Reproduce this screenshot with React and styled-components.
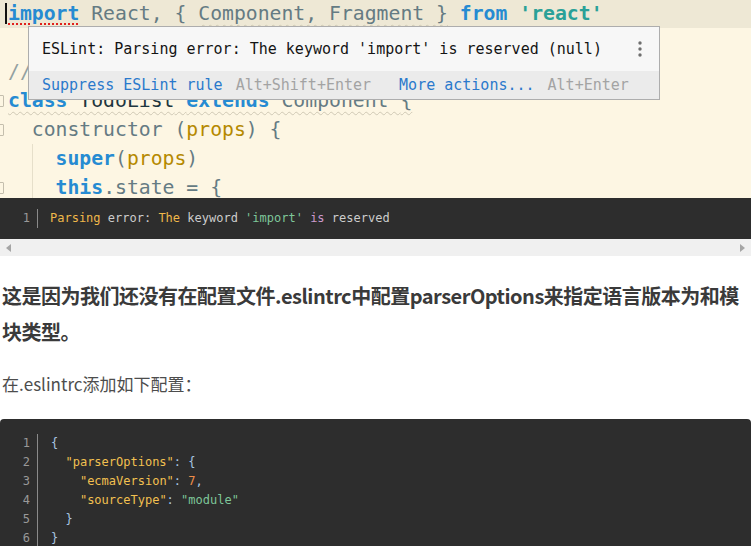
import React from "react";
import styled, { createGlobalStyle } from "styled-components";

const GlobalStyle = createGlobalStyle`
  html, body {
    margin: 0;
    padding: 0;
    background: #fff;
  }
  body {
    font-family: "Noto Sans CJK SC", "Noto Sans", sans-serif;
    overflow: hidden;
  }
`;

const Page = styled.div`
  width: 751px;
`;

/* ---------- IDE screenshot ---------- */

const Editor = styled.section`
  position: relative;
  height: 198px;
  overflow: hidden;
  background: #fdf6e3;
  font-family: "DejaVu Sans Mono", monospace;
  font-size: 19.75px;
`;

const EditorLines = styled.div`
  margin-top: -1px;
`;

const EditorLine = styled.div`
  position: relative;
  height: 29px;
  line-height: 29px;
  padding-left: 8px;
  white-space: pre;
  color: #657b83;
  background: ${(p) => (p.$current ? "#eee8d5" : "transparent")};

  &::before {
    content: "";
    display: ${(p) => (p.$fold ? "block" : "none")};
    position: absolute;
    left: -6px;
    top: 9px;
    width: 8px;
    height: 10px;
    border: 1px solid #c4bead;
    border-radius: 1px;
  }

  &::after {
    content: "";
    display: ${(p) => (p.$guide ? "block" : "none")};
    position: absolute;
    left: 32px;
    top: 0;
    bottom: 0;
    width: 1px;
    background: #e6dfca;
  }
`;

const Caret = styled.span`
  display: inline-block;
  width: 2px;
  height: 21px;
  margin-left: -3px;
  margin-right: 1px;
  vertical-align: -4px;
  background: #111;
`;

const Kw = styled.span`
  color: #268bd2;
  font-weight: bold;
  text-decoration: ${(p) => (p.$error ? "underline dotted #e0201c" : "none")};
  text-decoration-thickness: 2px;
  text-underline-offset: 3px;
`;

const Str = styled.span`
  color: #2aa198;
  font-weight: bold;
`;

const Param = styled.span`
  color: #b58900;
`;

const TypeName = styled.span`
  color: #1f3740;
`;

const Comment = styled.span`
  color: #93a1a1;
`;

const Weak = styled.span`
  text-decoration: underline wavy #cfc8b4;
  text-decoration-thickness: 1px;
  text-underline-offset: 4px;
`;

const Hint = styled.div`
  position: absolute;
  left: 28px;
  top: 26px;
  width: 630px;
  border: 1px solid #adadad;
  background: #f7f7f7;
  font-family: "DejaVu Sans Mono", monospace;
  font-size: 15px;
`;

const HintMessage = styled.div`
  display: flex;
  align-items: center;
  justify-content: space-between;
  height: 44px;
  padding: 0 17px 0 13px;
  color: #141414;
  white-space: pre;
`;

const HintActions = styled.div`
  display: flex;
  align-items: center;
  gap: 28px;
  height: 28px;
  padding-left: 13px;
  background: #ebebeb;
  white-space: pre;
`;

const HintAction = styled.span`
  display: flex;
  gap: 13px;
`;

const ActionLink = styled.span`
  color: #2a79cc;
`;

const Shortcut = styled.span`
  color: #a3a3a3;
`;

const Kebab = () => (
  <svg width="4" height="16" viewBox="0 0 4 16">
    <circle cx="2" cy="2" r="1.7" fill="#6e6e6e" />
    <circle cx="2" cy="8" r="1.7" fill="#6e6e6e" />
    <circle cx="2" cy="14" r="1.7" fill="#6e6e6e" />
  </svg>
);

/* ---------- dark code blocks ---------- */

const CodeBlock = styled.div`
  background: #2d2d2d;
  padding: ${(p) => (p.$boxed ? "14.5px 0 14px" : "11px 0")};
  margin-top: ${(p) => (p.$boxed ? "22px" : "0")};
  border-radius: ${(p) => (p.$boxed ? "4px 4px 0 0" : "0")};
  font-family: "DejaVu Sans Mono", monospace;
  font-size: 12px;
  color: #cccccc;
`;

const CodeRow = styled.div`
  display: flex;
  line-height: 19px;
  white-space: pre;
`;

const LineNo = styled.span`
  box-sizing: border-box;
  width: 38px;
  flex: none;
  padding-right: 7px;
  text-align: right;
  color: #999;
  border-right: 1px solid #8a8a8a;
`;

const CodeText = styled.span`
  padding-left: ${(p) => p.$pad || 12}px;
`;

const Tok = styled.span`
  color: ${(p) => p.$c};
`;

const Scrollbar = styled.div`
  display: flex;
  align-items: center;
  justify-content: space-between;
  height: 17px;
  padding: 0 6px;
  background: #f0f0f0;
`;

const Arrow = styled.span`
  width: 0;
  height: 0;
  border-top: 4px solid transparent;
  border-bottom: 4px solid transparent;
  border-${(p) => (p.$dir === "left" ? "right" : "left")}: 5px solid #a5a5a5;
`;

/* ---------- article text ---------- */

const Lead = styled.p`
  margin: 22px 0 0;
  padding-left: 2px;
  font-size: 20px;
  line-height: 36px;
  font-weight: 700;
  letter-spacing: -0.5px;
  color: #3a3a3a;
`;

const Note = styled.p`
  margin: 21px 0 0;
  padding-left: 2px;
  font-size: 17px;
  line-height: 26px;
  color: #4d4d4d;
`;

const YELLOW = "#f2c050";
const GREEN = "#7ec699";
const PUNCT = "#a9c6e2";
const ORANGE = "#f08d49";
const PURPLE = "#cc99cd";

const jsonLines = [
  [["{", PUNCT]],
  [["  "], ['"parserOptions"', YELLOW], [": {", PUNCT]],
  [["    "], ['"ecmaVersion"', YELLOW], [": ", PUNCT], ["7", ORANGE], [",", PUNCT]],
  [["    "], ['"sourceType"', YELLOW], [": ", PUNCT], ['"module"', GREEN]],
  [["  "], ["}", PUNCT]],
  [["}", PUNCT]],
];

const App = () => (
  <Page>
    <GlobalStyle />
    <Editor>
      <EditorLines>
        <EditorLine $current>
          <Caret />
          <Kw $error>import</Kw> React, {"{ "}
          <Weak>Component, Fragment {"}"}</Weak> <Kw>from</Kw> <Str>'react'</Str>
        </EditorLine>
        <EditorLine />
        <EditorLine>
          <Comment>// render a todo list</Comment>
        </EditorLine>
        <EditorLine $fold>
          <Weak>
            <Kw>class</Kw> <TypeName>TodoList</TypeName> <Kw>extends</Kw> Component {"{"}
          </Weak>
        </EditorLine>
        <EditorLine $fold>
          {"  "}constructor (<Param>props</Param>) {"{"}
        </EditorLine>
        <EditorLine $guide>
          {"    "}<Kw>super</Kw>(<Param>props</Param>)
        </EditorLine>
        <EditorLine $guide $fold>
          {"    "}<Kw>this</Kw>.state = {"{"}
        </EditorLine>
      </EditorLines>

      <Hint>
        <HintMessage>
          <span>ESLint: Parsing error: The keyword 'import' is reserved (null)</span>
          <Kebab />
        </HintMessage>
        <HintActions>
          <HintAction>
            <ActionLink>Suppress ESLint rule</ActionLink>
            <Shortcut>Alt+Shift+Enter</Shortcut>
          </HintAction>
          <HintAction>
            <ActionLink>More actions...</ActionLink>
            <Shortcut>Alt+Enter</Shortcut>
          </HintAction>
        </HintActions>
      </Hint>
    </Editor>

    <CodeBlock>
      <CodeRow>
        <LineNo>1</LineNo>
        <CodeText>
          <Tok $c="#efb84a">Parsing</Tok> error: <Tok $c="#efb84a">The</Tok> keyword{" "}
          <Tok $c={GREEN}>'import'</Tok> <Tok $c={PURPLE}>is</Tok> reserved
        </CodeText>
      </CodeRow>
    </CodeBlock>
    <Scrollbar>
      <Arrow $dir="left" />
      <Arrow $dir="right" />
    </Scrollbar>

    <Lead>
      这是因为我们还没有在配置文件.eslintrc中配置parserOptions来指定语言版本为和模块类型。
    </Lead>
    <Note>在.eslintrc添加如下配置：</Note>

    <CodeBlock $boxed>
      {jsonLines.map((tokens, i) => (
        <CodeRow key={i}>
          <LineNo>{i + 1}</LineNo>
          <CodeText $pad={13}>
            {tokens.map(([text, color], j) => (
              <Tok key={j} $c={color || "#ccc"}>
                {text}
              </Tok>
            ))}
          </CodeText>
        </CodeRow>
      ))}
    </CodeBlock>
  </Page>
);

export default App;
